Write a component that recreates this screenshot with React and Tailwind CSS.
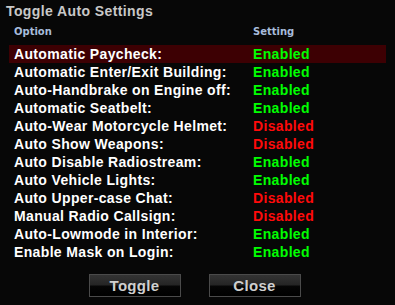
const ROWS = [
  ['Automatic Paycheck:', true],
  ['Automatic Enter/Exit Building:', true],
  ['Auto-Handbrake on Engine off:', true],
  ['Automatic Seatbelt:', true],
  ['Auto-Wear Motorcycle Helmet:', false],
  ['Auto Show Weapons:', false],
  ['Auto Disable Radiostream:', true],
  ['Auto Vehicle Lights:', true],
  ['Auto Upper-case Chat:', false],
  ['Manual Radio Callsign:', false],
  ['Auto-Lowmode in Interior:', true],
  ['Enable Mask on Login:', true],
]

export default function App() {
  return (
    <div className="w-[395px] h-[305px] bg-[#070707] flex flex-col font-['Liberation_Sans',Arial,sans-serif] font-bold">
      {/* Title */}
      <div className="pl-[6px] pt-[1px] h-[21px] text-[14px] leading-[21px] tracking-[0.4px] text-[#c8c8c8]">Toggle Auto Settings</div>

      {/* Column headers */}
      <div className="grid grid-cols-[239px_1fr] pl-[14px] pr-2 h-[21px] text-[10px] leading-[16px] pt-[3px] text-[#a7bcdc] font-['DejaVu_Sans',sans-serif]">
        <span>Option</span>
        <span>Setting</span>
      </div>

      {/* Rows */}
      <div className="mx-[9px] mt-[3px] flex flex-col">
        {ROWS.map(([name, on], i) => (
          <div
            key={name}
            className={`grid grid-cols-[239px_1fr] h-[18px] pl-[5px] items-center text-[14px] leading-[18px] tracking-[0.35px] ${i === 0 ? 'bg-[#3d0003]' : ''}`}
          >
            <span className="text-white whitespace-nowrap">{name}</span>
            <span className={on ? 'text-[#00ff00]' : 'text-[#ff0a0a]'}>{on ? 'Enabled' : 'Disabled'}</span>
          </div>
        ))}
      </div>

      {/* Buttons */}
      <div className="flex justify-center gap-[28px] mt-[13px] pr-[6px]">
        {['Toggle', 'Close'].map(label => (
          <button
            key={label}
            className="w-[92px] h-[23px] border border-[#4a4a4a] bg-[linear-gradient(to_bottom,#333_0%,#262626_45%,#050505_55%,#000_100%)] text-[#cfcfcf] text-[15px] leading-[21px] tracking-[0.3px] font-bold"
          >
            {label}
          </button>
        ))}
      </div>
    </div>
  )
}
